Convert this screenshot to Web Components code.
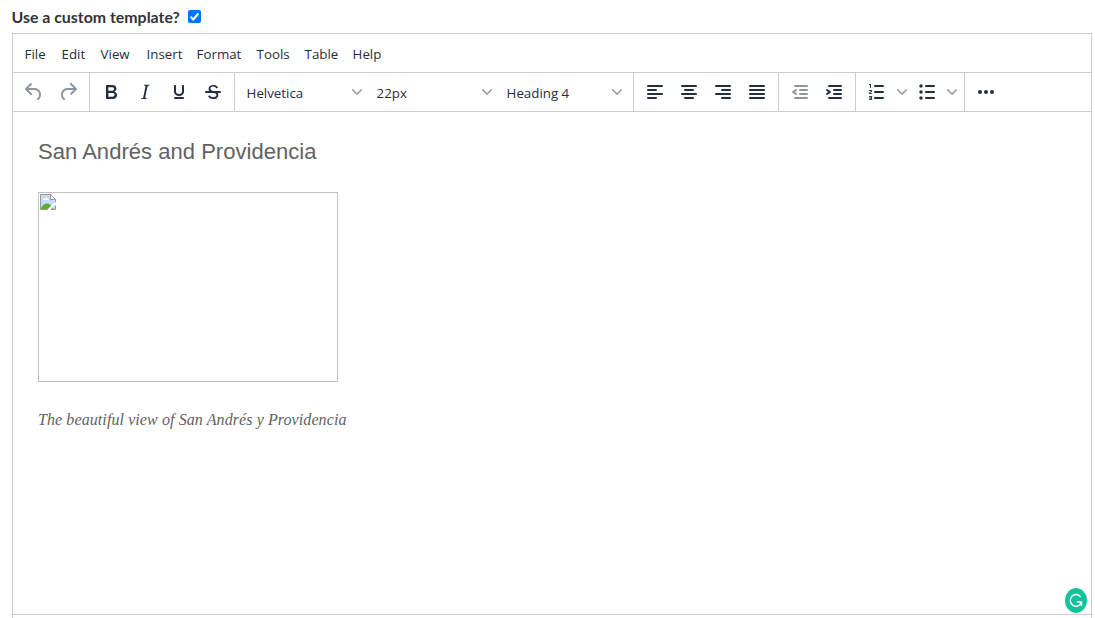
<!DOCTYPE html>
<html lang="en">
<head>
<meta charset="utf-8">
<title>Template editor</title>
<style>
html,body{margin:0;height:100%;overflow:hidden;background:#fff}
</style>
</head>
<body>
<template-page></template-page>
<script>
const bar=(x,y,w)=>`<rect x="${x}" y="${y}" width="${w}" height="2" rx="1"/>`;
const ICONS={
undo:'<path d="M6.4 8H12c3.7 0 6.2 2 6.8 5.1.6 2.7-.4 5.6-2.3 6.8a1 1 0 01-1-1.8c1.1-.6 1.8-2.7 1.4-4.6-.5-2.1-2.1-3.5-4.9-3.5H6.4l3.3 3.3a1 1 0 11-1.4 1.4l-5-5a1 1 0 010-1.4l5-5a1 1 0 011.4 1.4L6.4 8z"/>',
redo:'<path d="M17.6 10H12c-2.8 0-4.4 1.4-4.9 3.5-.4 2 .3 4 1.4 4.6a1 1 0 11-1 1.8c-2-1.2-2.9-4.1-2.3-6.8.6-3 3-5.1 6.8-5.1h5.6l-3.3-3.3a1 1 0 111.4-1.4l5 5a1 1 0 010 1.4l-5 5a1 1 0 01-1.4-1.4l3.3-3.3z"/>',
bold:'<path d="M7.8 19c-.3 0-.5 0-.6-.2l-.2-.5V5.7c0-.2 0-.4.2-.5l.6-.2h5c1.5 0 2.7.3 3.5 1 .7.6 1.1 1.4 1.1 2.5a3 3 0 01-.6 1.9c-.4.6-1 1-1.6 1.2.4.1.9.3 1.3.6s.8.7 1 1.2c.4.4.5 1 .5 1.6 0 1.3-.4 2.3-1.3 3-.8.7-2.1 1-3.8 1H7.8zm5-8.3c.6 0 1.2-.1 1.6-.5.4-.3.6-.7.6-1.3 0-1.1-.8-1.7-2.3-1.7H9.3v3.5h3.4zm.5 6c.7 0 1.3-.1 1.7-.4.4-.4.6-.9.6-1.5s-.2-1-.7-1.4c-.4-.3-1-.4-2-.4H9.4v3.8h4z" fill-rule="evenodd"/>',
italic:'<path d="M16.7 4.7l-.1.9h-.3c-.6 0-1 0-1.4.3-.3.3-.4.6-.5 1.1l-2.1 9.8v.6c0 .5.4.8 1.4.8h.2l-.2.8H8l.2-.8h.2c1.1 0 1.8-.5 2-1.5l2-9.8.1-.5c0-.6-.4-.8-1.4-.8h-.3l.2-.9h5.8z"/>',
underline:'<path d="M16 5c.6 0 1 .4 1 1v5.5a4 4 0 01-.4 1.8l-1 1.4a5.3 5.3 0 01-5.5 1 5 5 0 01-1.6-1c-.5-.4-.8-.9-1.1-1.4a4 4 0 01-.4-1.8V6c0-.6.4-1 1-1s1 .4 1 1v5.5c0 .3 0 .6.2 1l.6.7a3.3 3.3 0 002.2.8 3.4 3.4 0 002.2-.8c.3-.2.4-.5.6-.8l.2-.9V6c0-.6.4-1 1-1z"/>'+bar(7,17,10),
strike:'<path d="M15.6 8.5c-.5-.7-1-1.1-1.3-1.3-.6-.4-1.3-.6-2-.6-2.7 0-2.8 1.7-2.8 2.1 0 1.6 1.8 2 3.2 2.3 4.4.9 4.6 2.8 4.6 3.9 0 1.4-.7 4.1-5 4.1A6.2 6.2 0 017 16.4l1.5-1.1c.4.6 1.6 2 3.7 2 1.6 0 2.5-.4 3-1.2.4-.8.3-2-.8-2.6-.7-.4-1.6-.7-2.9-1-1-.2-3.9-.8-3.9-3.6C7.6 6 10.3 5 12.4 5c2.9 0 4.2 1.6 4.7 2.4l-1.5 1.1z"/>'+bar(4,11,16),
left:bar(4,5,16)+bar(4,9,10)+bar(4,13,16)+bar(4,17,10),
center:bar(4,5,16)+bar(7,9,10)+bar(4,13,16)+bar(7,17,10),
right:bar(4,5,16)+bar(10,9,10)+bar(4,13,16)+bar(10,17,10),
justify:bar(4,5,16)+bar(4,9,16)+bar(4,13,16)+bar(4,17,16),
outdent:bar(6,5,14)+bar(11,9,9)+bar(11,13,9)+bar(6,17,14)+'<path d="M8.6 13.2a1 1 0 01-1.2 1.6l-3-2a1 1 0 010-1.6l3-2a1 1 0 011.2 1.6L6.8 12l1.8 1.2z"/>',
indent:bar(6,5,14)+bar(11,9,9)+bar(11,13,9)+bar(6,17,14)+'<path d="M4.4 13.2L6.2 12l-1.8-1.2a1 1 0 011.2-1.6l3 2a1 1 0 010 1.6l-3 2a1 1 0 11-1.2-1.6z"/>',
ol:bar(9,5,10)+bar(9,11,10)+bar(9,17,10)+'<path d="M6 4v3.5c0 .3-.2.5-.5.5a.5.5 0 01-.5-.5V5h-.5a.5.5 0 010-1H6zm-1 8.8l.2.2h1.3c.3 0 .5.2.5.5s-.2.5-.5.5H4.9a1 1 0 01-.9-1V13c0-.4.3-.8.6-1l1.2-.4.2-.3a.2.2 0 00-.2-.2H4.5a.5.5 0 01-.5-.5c0-.3.2-.5.5-.5h1.6c.5 0 .9.4.9 1v.1c0 .4-.3.8-.6 1l-1.2.4-.2.3zM7 17v2c0 .6-.4 1-1 1H4.5a.5.5 0 010-1h1.2c.2 0 .3-.1.3-.3 0-.2-.1-.3-.3-.3H4.4a.4.4 0 110-.8h1.3c.2 0 .3-.1.3-.3 0-.2-.1-.3-.3-.3H4.5a.5.5 0 110-1H6c.6 0 1 .4 1 1z"/>',
ul:bar(10,5,10)+bar(10,11,10)+bar(10,17,10)+'<circle cx="6" cy="6" r="1.75"/><circle cx="6" cy="12" r="1.75"/><circle cx="6" cy="18" r="1.75"/>',
more:'<circle cx="6" cy="12" r="2"/><circle cx="12" cy="12" r="2"/><circle cx="18" cy="12" r="2"/>'
};
const CHEVRON='<svg class="chev" width="10" height="10" viewBox="0 0 10 10"><path d="M8.7 2.2c.3-.3.8-.3 1 0 .4.4.4.9 0 1.2L5.7 7.8c-.3.3-.9.3-1.2 0L.2 3.4a.8.8 0 010-1.2c.3-.3.8-.3 1.1 0L5 6l3.7-3.8z"/></svg>';
const define=(name,render)=>customElements.define(name,class extends HTMLElement{
  connectedCallback(){ if(!this.shadowRoot) this.attachShadow({mode:'open'}).innerHTML=render(this); }
});

define('tool-button',el=>`<style>
:host{display:flex;align-items:center;width:34px;height:34px;color:#222f3e}
:host([split]){width:50px}
:host([disabled]){color:#9096a0}
svg{display:block;fill:currentColor;flex:none}
.main{margin-left:5px}
.chev{fill:#9ba1a9;margin-left:8px}
</style><svg class="main" width="24" height="24" viewBox="0 0 24 24">${ICONS[el.getAttribute('icon')]}</svg>${el.hasAttribute('split')?CHEVRON:''}`);

define('tool-select',el=>`<style>
:host{display:flex;align-items:center;justify-content:space-between;box-sizing:border-box;width:130px;height:34px;padding:0 7px 0 7.6px}
.chev{fill:#9ba1a9;flex:none}
span{padding-top:2px}
</style><span><slot></slot></span>${CHEVRON}`);

define('tool-group',()=>`<style>
:host{display:flex;align-items:flex-start;box-sizing:border-box;height:38px;padding:2px 4px;border-right:1px solid #ccc}
:host(:last-of-type){border-right:0}
</style><slot></slot>`);

define('menu-item',()=>`<style>
:host{display:block;white-space:nowrap}
</style><slot></slot>`);

define('menu-bar',()=>`<style>
:host{display:grid;grid-template-columns:37px 39px 46px 50px 60px 48px 48px 40px;align-items:center;height:38px;padding:1px 0 0 11.6px;box-sizing:border-box}
</style><slot></slot>`);

define('tool-bar',()=>`<style>
:host{display:flex;border-top:1px solid #ccc;border-bottom:1px solid #ccc;height:38px}
</style><slot></slot>`);

define('check-field',()=>`<style>
:host{display:flex;align-items:center;height:33px;padding-left:11.5px;font:bold 15.9px/20px Lato,sans-serif;color:#333}
span{padding-top:1px;width:169.500px;white-space:nowrap}
svg{display:block;margin-left:7px}
</style><span><slot></slot></span><svg width="13" height="13" viewBox="0 0 13 13"><rect width="13" height="13" rx="2" fill="#0075ff"/><path d="M2.6 6.8l2.7 2.7 5.1-6" fill="none" stroke="#fff" stroke-width="2"/></svg>`);

define('missing-image',()=>`<style>
:host{display:block;box-sizing:border-box;width:300px;height:190px;border:1px solid #c0c0c0;padding:1px}
svg{display:block}
</style><svg width="16" height="16" viewBox="0 0 16 16"><path d="M.5.5h10l5 5v10H.5z" fill="#c9daf8"/><path d="M3 6c-.2-1.200.8-2 1.800-1.500.5-1.300 2.500-1.300 2.800.3 1 0 1.400.7 1 1.200z" fill="#fff"/><path d="M1 15v-1c1.500-2.500 3.500-4.500 6-4.500 2.200 0 4.500 1.500 6.500 5.500z" fill="#55ad33"/><path d="M.5.5h10l5 5v10H.5z" fill="none" stroke="#999"/><path d="M10.500.5v5h5z" fill="#fff" stroke="#999"/><path d="M16 8l-3 1.800L7 16h3.500l3-3.500L16 11z" fill="#fff"/></svg>`);

define('editor-body',()=>`<style>
:host{display:block;box-sizing:border-box;height:502px;padding:26px 25px 0;color:#626262}
h4{margin:0;font:400 22px/28px "Liberation Sans",Arial,sans-serif;letter-spacing:.03px}
missing-image{margin-top:26px}
p{margin:27px 0 0;font:italic 16px/22px "Palatino Linotype","Liberation Serif",serif;white-space:nowrap;letter-spacing:.09px}
</style><h4><slot name="title"></slot></h4><missing-image></missing-image><p><slot name="caption"></slot></p>`);

define('writing-badge',()=>`<style>
:host{display:block;position:absolute;right:4px;bottom:1px;width:22px;height:25px}
svg{display:block}
</style><svg width="22" height="25" viewBox="0 0 22 25"><ellipse cx="11" cy="12.500" rx="11" ry="12.500" fill="#15c39a"/><path d="M15.600 9A5.700 5.900 0 1 0 16.300 14.500M12 14h4.500v4" fill="none" stroke="#fff" stroke-width="1.400"/></svg>`);

define('rich-editor',()=>`<style>
:host{display:block;position:relative;box-sizing:border-box;width:1080px;margin-left:12px;height:582px;border:1px solid #ccc;font:13.300px/18px "Open Sans",sans-serif;color:#222f3e}
</style><slot></slot>`);

define('template-page',()=>`<style>
:host{display:block;height:618px;overflow:hidden;background:#fff}
footer{box-sizing:border-box;width:1080px;height:6px;margin-left:12px;border:1px solid #ccc;border-width:0 1px}
</style>
<check-field>Use a custom template?</check-field>
<rich-editor>
<menu-bar><menu-item>File</menu-item><menu-item>Edit</menu-item><menu-item>View</menu-item><menu-item>Insert</menu-item><menu-item>Format</menu-item><menu-item>Tools</menu-item><menu-item>Table</menu-item><menu-item>Help</menu-item></menu-bar>
<tool-bar>
<tool-group><tool-button icon="undo" disabled></tool-button><tool-button icon="redo" disabled></tool-button></tool-group>
<tool-group><tool-button icon="bold"></tool-button><tool-button icon="italic"></tool-button><tool-button icon="underline"></tool-button><tool-button icon="strike"></tool-button></tool-group>
<tool-group><tool-select>Helvetica</tool-select><tool-select>22px</tool-select><tool-select>Heading 4</tool-select></tool-group>
<tool-group><tool-button icon="left"></tool-button><tool-button icon="center"></tool-button><tool-button icon="right"></tool-button><tool-button icon="justify"></tool-button></tool-group>
<tool-group><tool-button icon="outdent" disabled></tool-button><tool-button icon="indent"></tool-button></tool-group>
<tool-group><tool-button icon="ol" split></tool-button><tool-button icon="ul" split></tool-button></tool-group>
<tool-group><tool-button icon="more"></tool-button></tool-group>
</tool-bar>
<editor-body><span slot="title">San Andrés and Providencia</span><span slot="caption">The beautiful view of San Andrés y Providencia</span></editor-body>
<writing-badge></writing-badge>
</rich-editor>
<footer></footer>`);
</script>
</body>
</html>
